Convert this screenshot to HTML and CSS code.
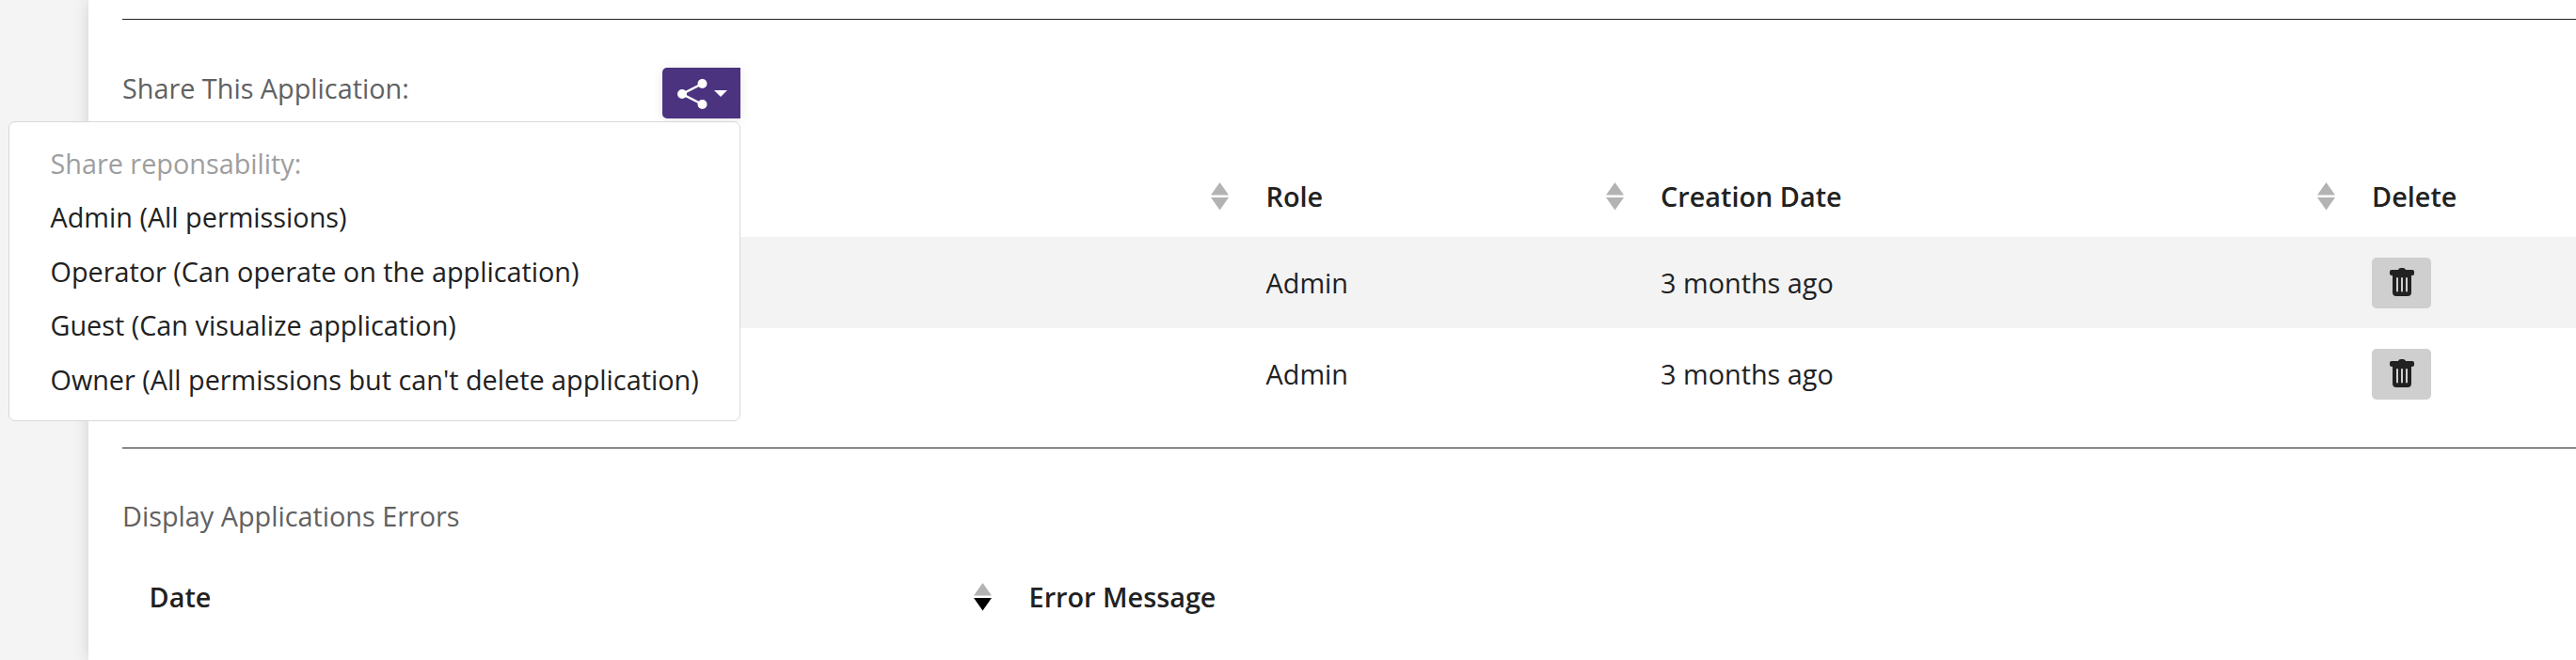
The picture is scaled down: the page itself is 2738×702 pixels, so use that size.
FILE: index.html
```html
<!DOCTYPE html>
<html lang="en">
<head>
<meta charset="utf-8">
<title>Application</title>
<link rel="stylesheet" href="styles.css">
</head>
<body>
<svg class="defs" aria-hidden="true">
  <symbol id="sort" viewBox="0 0 19 30"><path class="up" d="M9.5 0 19 13.5H0z"/><path class="down" d="M0 16h19L9.5 29.5z"/></symbol>
  <symbol id="trash" viewBox="0 0 26 30"><path d="M9 2Q9.5 0 12 0h2q2.500 0 3 2h7q2 0 2 2v2q0 2-2 2h-1v18q0 4-4 4H7q-4 0-4-4V8H2Q0 8 0 6V4q0-2 2-2z"/><path class="slats" d="M8 11v13.500M13 11v13.500M18 11v13.500"/></symbol>
</svg>
<main class="panel">
  <section class="section share">
    <header class="share-head">
      <h2 class="title">Share This Application:</h2>
      <div class="dropdown">
        <button class="share-btn" aria-label="Share">
          <svg class="share-icon" viewBox="0 0 32 32"><path d="M26.500 5 5 16l21.500 11"/><circle cx="26.500" cy="5" r="5"/><circle cx="5" cy="16" r="5"/><circle cx="26.500" cy="27" r="5"/></svg>
          <svg class="caret" viewBox="0 0 14 7"><path d="M0 0h14L7 7z"/></svg>
        </button>
        <div class="menu">
          <div class="menu-label">Share reponsability:</div>
          <div class="menu-item">Admin (All permissions)</div>
          <div class="menu-item">Operator (Can operate on the application)</div>
          <div class="menu-item">Guest (Can visualize application)</div>
          <div class="menu-item">Owner (All permissions but can't delete application)</div>
        </div>
      </div>
    </header>
    <div class="table">
      <div class="row shares head"><div class="cell"><svg class="sort"><use href="#sort"/></svg></div><div class="cell">Role<svg class="sort"><use href="#sort"/></svg></div><div class="cell">Creation Date<svg class="sort"><use href="#sort"/></svg></div><div class="cell">Delete</div></div>
      <div class="row shares striped"><div class="cell"></div><div class="cell">Admin</div><div class="cell">3 months ago</div><div class="cell"><button class="delete" aria-label="Delete"><svg class="trash"><use href="#trash"/></svg></button></div></div>
      <div class="row shares"><div class="cell"></div><div class="cell">Admin</div><div class="cell">3 months ago</div><div class="cell"><button class="delete" aria-label="Delete"><svg class="trash"><use href="#trash"/></svg></button></div></div>
    </div>
  </section>
  <section class="section errors">
    <h2 class="title">Display Applications Errors</h2>
    <div class="table">
      <div class="row errs head"><div class="cell">Date<svg class="sort desc"><use href="#sort"/></svg></div><div class="cell">Error Message</div></div>
    </div>
  </section>
</main>
</body>
</html>
```
FILE: styles.css
```css
* { box-sizing: border-box; }
body {
  margin: 0;
  height: 702px;
  overflow: hidden;
  padding-left: 94px;
  background: #f4f4f4;
  color: #212121;
  font: 28.8px/38px "Open Sans", "Noto Sans", sans-serif;
}
.defs { position: absolute; width: 0; height: 0; }
.panel {
  height: 702px;
  padding: 20px 0 0 36px;
  background: #fff;
  box-shadow: 0 0 16px rgba(0, 0, 0, .15);
}
.section { border-top: 1px solid #212121; }
.share { height: 456px; }
.share-head {
  display: flex;
  justify-content: space-between;
  width: 657px;
  height: 145px;
  padding-top: 51px;
}
.title { margin: 3px 0 0; color: #616161; font-size: 28.8px; font-weight: 400; line-height: 38px; }
.dropdown { position: relative; width: 83px; height: 54px; }
.share-btn {
  display: flex;
  align-items: center;
  gap: 7px;
  width: 83px;
  height: 54px;
  padding: 0 0 0 16px;
  border: 0;
  border-radius: 5px 0 0 5px;
  background: #4b3380;
  box-shadow: 0 2px 12px rgba(0, 0, 0, .1);
}
.share-icon { width: 32px; height: 32px; fill: #fff; margin-top: 2px; }
.share-icon path { fill: none; stroke: #fff; stroke-width: 2.5; }
.caret { width: 14px; height: 7px; fill: #fff; }
.menu {
  position: absolute;
  top: 57px;
  right: 0;
  width: 778px;
  height: 319px;
  padding: 15px 0 0 43.5px;
  border: 1px solid #d8d8d8;
  border-radius: 7px;
  background: #fff;
  white-space: nowrap;
}
.menu-label, .menu-item { height: 57.4px; line-height: 57.4px; }
.menu-label { color: #9e9e9e; }
.row { display: grid; height: 97px; }
.shares { grid-template-columns: 1187px 419.500px 756px 1fr; }
.errs { grid-template-columns: 935px 1fr; }
.head { height: 86px; font-weight: 600; }
.striped { background: #f3f3f3; }
.cell { display: flex; align-items: center; padding: 0 11px 0 28.6px; }
.sort { width: 19px; height: 30px; margin-left: auto; fill: #b3b3b3; --down: #b3b3b3; }
.desc { --down: #000; }
.down { fill: var(--down); }
.delete {
  display: flex;
  align-items: center;
  justify-content: center;
  width: 63px;
  height: 54px;
  padding: 0 0 2px;
  border: 0;
  border-radius: 5px;
  background: #cfcfcf;
}
.trash { width: 26px; height: 30px; fill: #212121; }
.slats { fill: none; stroke: #cfcfcf; stroke-width: 2; stroke-linecap: round; }
.errors { padding-top: 50px; }
.errors .row { margin-top: 24px; }
```
